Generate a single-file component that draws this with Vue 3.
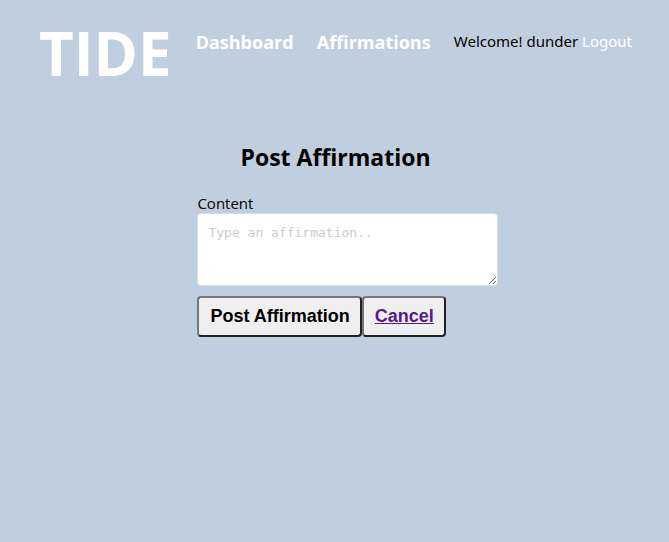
<script setup>
import { ref } from 'vue'

const content = ref('')
const user = 'dunder'
</script>

<template>
  <header class="header">
    <h1 class="logo">TIDE</h1>
    <nav class="nav">
      <a class="nav-link" href="#dashboard">Dashboard</a>
      <a class="nav-link" href="#affirmations">Affirmations</a>
      <span class="welcome">Welcome! {{ user }} <a class="logout" href="#logout">Logout</a></span>
    </nav>
  </header>
  <main class="main">
    <h2 class="title">Post Affirmation</h2>
    <form class="form" @submit.prevent>
      <label class="label" for="content">Content</label>
      <textarea id="content" v-model="content" class="content" placeholder="Type an affirmation.."></textarea>
      <div class="actions">
        <button class="button" type="submit">Post Affirmation</button>
        <button class="button cancel" type="button">Cancel</button>
      </div>
    </form>
  </main>
</template>

<style>
body {
  background: #c0cfdf;
  color: #000;
  font-family: "Segoe UI", "Open Sans", "Noto Sans", sans-serif;
  font-size: 15px;
}
</style>

<style scoped>
.header {
  display: flex;
  gap: 24px;
  padding: 13px 37px 0 39px;
}
.logo {
  margin: 0;
  color: #fff;
  font-size: 60px;
  line-height: 80px;
  font-weight: 700;
}
.nav {
  display: flex;
  flex: 1;
  justify-content: space-between;
  align-items: flex-start;
  padding-top: 16px;
  line-height: 26px;
  white-space: nowrap;
}
.nav-link {
  color: #fff;
  font-size: 18px;
  font-weight: 700;
  text-decoration: none;
}
.welcome {
  font-family: "Segoe UI", "Noto Sans", sans-serif;
  line-height: 24px;
}
.logout {
  color: #fff;
  text-decoration: none;
}
.main {
  display: flex;
  flex-direction: column;
  align-items: center;
  padding: 48px 0 0 2px;
}
.title {
  margin: 0;
  font-size: 23px;
  line-height: 32px;
  font-weight: 700;
}
.form {
  display: flex;
  flex-direction: column;
  width: 45%;
  margin: 20px 0 0 24px;
}
.label {
  line-height: 20px;
}
.content {
  box-sizing: border-box;
  width: 100%;
  height: 73px;
  padding: 10px;
  border: 1px solid #ddd;
  border-radius: 4px;
  background: #fff;
  font: 13px/18px "DejaVu Sans Mono", monospace;
  resize: both;
}
.content::placeholder {
  color: #ccc;
}
.actions {
  display: flex;
  margin-top: 10px;
}
.button {
  padding: 8px 10px 8px 11px;
  border: 2px outset #767676;
  border-radius: 4px;
  background: #efefef;
  color: #000;
  font: 700 18px/21px "Liberation Sans", Arial, sans-serif;
  white-space: nowrap;
}
.cancel {
  color: #551a8b;
  text-decoration: underline;
}
</style>
